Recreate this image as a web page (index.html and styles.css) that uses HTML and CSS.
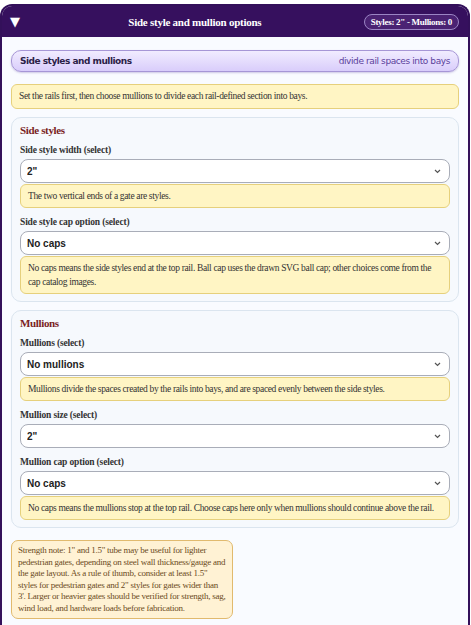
FILE: index.html
```html
<!DOCTYPE html>
<html lang="en">
<head>
    <meta charset="UTF-8">
    <meta name="viewport" content="width=device-width, initial-scale=1.0">
    <title>Side style and mullion options</title>
    <link rel="stylesheet" href="styles.css">
</head>
<body>
    <div class="panel">
        <div class="panel-head">
            <span class="toggle">&#9660;</span>
            <span class="panel-title">Side style and mullion options</span>
            <span class="summary">Styles: 2" - Mullions: 0</span>
        </div>
        <div class="panel-body">
            <div class="group-bar">
                <span class="group-name">Side styles and mullions</span>
                <span class="group-hint">divide rail spaces into bays</span>
            </div>

            <div class="note">Set the rails first, then choose mullions to divide each rail-defined section into bays.</div>

            <div class="card">
                <h3>Side styles</h3>
                <label for="style-width">Side style width (select)</label>
                <select id="style-width">
                    <option>2"</option>
                    <option>1.5"</option>
                    <option>1"</option>
                </select>
                <div class="note inner">The two vertical ends of a gate are styles.</div>

                <label for="style-cap">Side style cap option (select)</label>
                <select id="style-cap">
                    <option>No caps</option>
                    <option>Ball cap</option>
                </select>
                <div class="note inner">No caps means the side styles end at the top rail. Ball cap uses the drawn SVG ball cap; other choices come from the cap catalog images.</div>
            </div>

            <div class="card">
                <h3>Mullions</h3>
                <label for="mullions">Mullions (select)</label>
                <select id="mullions">
                    <option>No mullions</option>
                    <option>1</option>
                    <option>2</option>
                </select>
                <div class="note inner">Mullions divide the spaces created by the rails into bays, and are spaced evenly between the side styles.</div>

                <label for="mullion-size">Mullion size (select)</label>
                <select id="mullion-size">
                    <option>2"</option>
                    <option>1.5"</option>
                </select>

                <label for="mullion-cap">Mullion cap option (select)</label>
                <select id="mullion-cap">
                    <option>No caps</option>
                    <option>Ball cap</option>
                </select>
                <div class="note inner">No caps means the mullions stop at the top rail. Choose caps here only when mullions should continue above the rail.</div>
            </div>

            <div class="strength">Strength note: 1" and 1.5" tube may be useful for lighter pedestrian gates, depending on steel wall thickness/gauge and the gate layout. As a rule of thumb, consider at least 1.5" styles for pedestrian gates and 2" styles for gates wider than 3'. Larger or heavier gates should be verified for strength, sag, wind load, and hardware loads before fabrication.</div>
        </div>
    </div>
</body>
</html>
```

FILE: styles.css
```css
body {
    margin: 0;
    padding: 4px 1px 0 0;
    background: #ffffff;
    font-family: "Liberation Serif", "Times New Roman", serif;
    color: #333;
}
.panel {
    border: 2px solid #33105a;
    border-bottom: none;
    border-radius: 12px 12px 0 0;
    background: #f9fbff;
    min-height: 640px;
    overflow: hidden;
}
.panel-head {
    display: flex;
    align-items: center;
    height: 31px;
    padding: 0 9px 0 8px;
    background: #36105e;
    color: #fff;
}
.toggle {
    font-size: 13px;
    width: 16px;
    font-family: "DejaVu Sans", sans-serif;
}
.panel-title {
    flex: 1;
    text-align: center;
    font-weight: bold;
    font-size: 11px;
    letter-spacing: -0.25px;
}
.summary {
    font-size: 9px;
    font-weight: bold;
    letter-spacing: -0.3px;
    padding: 2px 6px;
    border: 1px solid #9b85c4;
    border-radius: 10px;
    background: #4a2273;
}
.panel-body {
    padding: 13px 9px 8px 9px;
}
.group-bar {
    display: flex;
    justify-content: space-between;
    align-items: center;
    height: 20px;
    padding: 0 8px;
    border: 1px solid #a696d6;
    border-radius: 10px;
    background: linear-gradient(#f1ecff, #d9cdfb);
    box-shadow: 0 1px 2px rgba(80, 50, 150, 0.25);
    font-family: "DejaVu Sans", Verdana, sans-serif;
    font-size: 9px;
}
.group-name {
    font-weight: bold;
    letter-spacing: -0.5px;
    color: #2b2148;
}
.group-hint {
    color: #5b3f9c;
    letter-spacing: -0.4px;
}
.note {
    margin-top: 12px;
    padding: 5px 7px;
    background: #fff5c4;
    border: 1px solid #e6d07c;
    border-radius: 6px;
    font-size: 9.5px;
    letter-spacing: -0.35px;
    line-height: 13px;
    color: #333;
}
.note.inner {
    margin-top: 1px;
    padding: 4px 7px 4px 7px;
    line-height: 14px;
}
.card {
    margin-top: 8px;
    padding: 6px 8px 7px 8px;
    background: #f6f9fd;
    border: 1px solid #dbe5ef;
    border-radius: 10px;
}
.card h3 {
    margin: 0 0 7px;
    font-size: 11px;
    line-height: 13px;
    letter-spacing: -0.35px;
    color: #7a1f1f;
}
.card label {
    display: block;
    margin-top: 8px;
    margin-bottom: 3px;
    font-size: 9.5px;
    line-height: 12px;
    font-weight: bold;
    letter-spacing: -0.15px;
    color: #333;
}
.card h3 + label {
    margin-top: 0;
}
.card select {
    display: block;
    width: 100%;
    height: 24px;
    margin: 0;
    padding: 0 5px 0 6px;
    border: 1px solid #a9adb8;
    border-radius: 8px;
    appearance: none;
    background: #fff url("data:image/svg+xml,%3Csvg xmlns='http://www.w3.org/2000/svg' width='7' height='5' viewBox='0 0 7 5'%3E%3Cpath d='M1 1l2.5 2.5L6 1' fill='none' stroke='%23555' stroke-width='1.2'/%3E%3C/svg%3E") no-repeat right 8px center;
    font-family: "Liberation Sans", Arial, sans-serif;
    font-size: 10px;
    font-weight: bold;
    color: #222;
}
.strength {
    width: 209px;
    margin-top: 12px;
    padding: 4px 5px 4px 6px;
    background: #fff2d4;
    border: 1px solid #e1ba6e;
    border-radius: 7px;
    font-size: 9px;
    letter-spacing: -0.25px;
    line-height: 11.5px;
    color: #6b4b1c;
}
```
